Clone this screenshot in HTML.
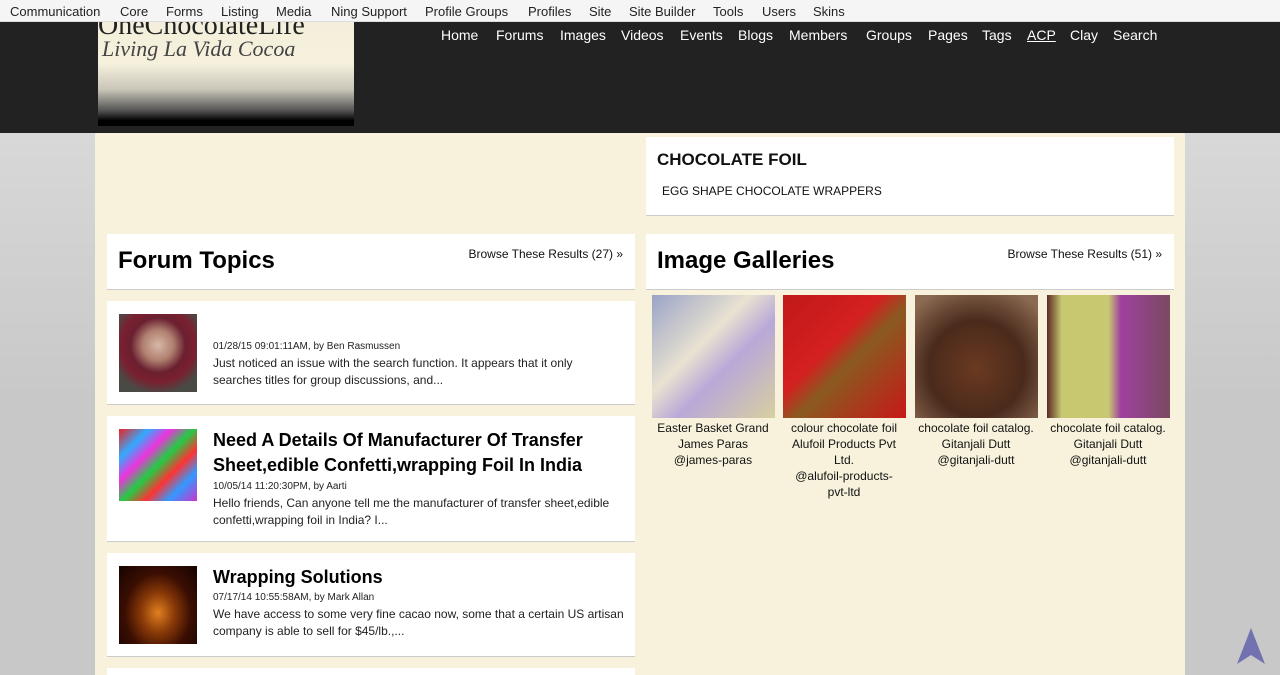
<!DOCTYPE html>
<html style="overflow:hidden;width:1280px;height:675px"><head><style>
*{margin:0;padding:0;box-sizing:border-box}
body{width:1280px;height:675px;overflow:hidden;position:relative;background:linear-gradient(#e0e0e0,#c8c8c8 400px);font-family:"Liberation Sans",sans-serif;color:#111}
.a{position:absolute;white-space:nowrap}
#top{position:absolute;left:0;top:0;width:1280px;height:22px;background:#f5f5f5;border-bottom:1px solid #ddd}
#top span{position:absolute;top:4px;font-size:13px;color:#222}
#hdr{position:absolute;left:0;top:22px;width:1280px;height:111px;background:#222}
#hdr span{position:absolute;top:5px;font-size:14px;color:#fff}
#logo{position:absolute;left:98px;top:22px;width:256px;height:104px;overflow:hidden;background:linear-gradient(#f4efdc 0,#f6f1dd 40%,#c9c5b8 65%,#555 85%,#000 95%)}
#wrap{position:absolute;left:95px;top:133px;width:1090px;height:542px;background:#f8f2dc}
.box{position:absolute;background:#fff;border-bottom:1px solid #ccc}
.h{font-weight:bold;font-size:24px;color:#000}
.br{font-size:12px;color:#111}
.meta{font-size:10px;color:#222}
.txt{font-size:12px;color:#222;line-height:17px}
.tt{font-weight:bold;font-size:18px;color:#000;line-height:25px}
.th{position:absolute;top:295px;width:123px;height:123px}
.cap{position:absolute;top:420px;width:132px;text-align:center;font-size:12px;line-height:16px;color:#111}
</style></head><body>
<div id="top">
<span style="left:10px">Communication</span><span style="left:120px">Core</span><span style="left:166px">Forms</span><span style="left:221px">Listing</span><span style="left:276px">Media</span><span style="left:331px">Ning Support</span><span style="left:425px">Profile Groups</span><span style="left:528px">Profiles</span><span style="left:589px">Site</span><span style="left:629px">Site Builder</span><span style="left:713px">Tools</span><span style="left:762px">Users</span><span style="left:813px">Skins</span>
</div>
<div id="hdr">
<span style="left:441px">Home</span><span style="left:496px">Forums</span><span style="left:560px">Images</span><span style="left:621px">Videos</span><span style="left:680px">Events</span><span style="left:738px">Blogs</span><span style="left:789px">Members</span><span style="left:866px">Groups</span><span style="left:928px">Pages</span><span style="left:982px">Tags</span><span style="left:1027px;text-decoration:underline">ACP</span><span style="left:1070px">Clay</span><span style="left:1113px">Search</span>
</div>
<div id="logo"><div class="a" style="left:0;top:-12px;font-family:'Liberation Serif',serif;font-size:28px;color:#222">OneChocolateLife</div><div class="a" style="left:4px;top:14px;font-family:'Liberation Serif',serif;font-style:italic;font-size:22px;color:#444">Living La Vida Cocoa</div></div>
<div id="wrap"></div>
<div class="box" style="left:646px;top:137px;width:528px;height:79px"><div class="a" style="left:11px;top:13px;font-weight:bold;font-size:17px">CHOCOLATE FOIL</div><div class="a" style="left:16px;top:47px;font-size:12px">EGG SHAPE CHOCOLATE WRAPPERS</div></div>
<div class="box" style="left:107px;top:234px;width:528px;height:56px"><div class="a h" style="left:11px;top:13px">Forum Topics</div><div class="a br" style="right:12px;top:13px">Browse These Results (27) »</div></div>
<div class="box" style="left:646px;top:234px;width:528px;height:56px"><div class="a h" style="left:11px;top:13px">Image Galleries</div><div class="a br" style="right:12px;top:13px">Browse These Results (51) »</div></div>
<div class="box" style="left:107px;top:301px;width:528px;height:104px">
<div class="a" style="left:12px;top:13px;width:78px;height:78px;background:radial-gradient(circle at 50% 40%,#d8b8a8 0,#b08070 25%,#6a2030 45%,#7a1f30 60%,#4a4a45 80%)"></div>
<div class="a meta" style="left:106px;top:40px">01/28/15 09:01:11AM, by Ben Rasmussen</div>
<div class="a txt" style="left:106px;top:54px">Just noticed an issue with the search function. It appears that it only<br>searches titles for group discussions, and...</div></div>
<div class="box" style="left:107px;top:416px;width:528px;height:126px">
<div class="a" style="left:12px;top:13px;width:78px;height:72px;background:linear-gradient(135deg,#e22 0,#3af 20%,#e3d 35%,#2c4 50%,#f33 65%,#39f 80%,#c3c 100%)"></div>
<div class="a tt" style="left:106px;top:12px">Need A Details Of Manufacturer Of Transfer<br>Sheet,edible Confetti,wrapping Foil In India</div>
<div class="a meta" style="left:106px;top:65px">10/05/14 11:20:30PM, by Aarti</div>
<div class="a txt" style="left:106px;top:79px">Hello friends, Can anyone tell me the manufacturer of transfer sheet,edible<br>confetti,wrapping foil in India? I...</div></div>
<div class="box" style="left:107px;top:553px;width:528px;height:104px">
<div class="a" style="left:12px;top:13px;width:78px;height:78px;background:radial-gradient(ellipse at 50% 60%,#e08020 0,#8a3a08 30%,#3a0e02 60%,#150400 100%)"></div>
<div class="a tt" style="left:106px;top:12px">Wrapping Solutions</div>
<div class="a meta" style="left:106px;top:39px">07/17/14 10:55:58AM, by Mark Allan</div>
<div class="a txt" style="left:106px;top:53px">We have access to some very fine cacao now, some that a certain US artisan<br>company is able to sell for $45/lb.,...</div></div>
<div class="box" style="left:107px;top:668px;width:528px;height:7px;border-bottom:none"></div>
<div class="th" style="left:652px;background:linear-gradient(135deg,#9aa3c8,#e8e2d0 40%,#b8a8d8 60%,#d8d0a0)"></div>
<div class="th" style="left:783px;background:linear-gradient(135deg,#c01818,#d42020 40%,#8a5a20 55%,#c81818)"></div>
<div class="th" style="left:915px;background:radial-gradient(circle at 50% 60%,#6a3a20,#4a2a1c 50%,#8a6a50 90%)"></div>
<div class="th" style="left:1047px;background:linear-gradient(90deg,#5a2a28 0,#c8c870 12%,#c8c870 50%,#a040a0 60%,#7a4a60 100%)"></div>
<div class="cap" style="left:647px">Easter Basket Grand<br>James Paras<br>@james-paras</div>
<div class="cap" style="left:778px">colour chocolate foil<br>Alufoil Products Pvt<br>Ltd.<br>@alufoil-products-<br>pvt-ltd</div>
<div class="cap" style="left:910px">chocolate foil catalog.<br>Gitanjali Dutt<br>@gitanjali-dutt</div>
<div class="cap" style="left:1042px">chocolate foil catalog.<br>Gitanjali Dutt<br>@gitanjali-dutt</div>
<svg class="a" style="left:1236px;top:627px" width="32" height="38" viewBox="0 0 32 38"><path d="M15 1 L29 37 L15 28 L1 37 Z" fill="#7272b0"/></svg>
</body></html>
